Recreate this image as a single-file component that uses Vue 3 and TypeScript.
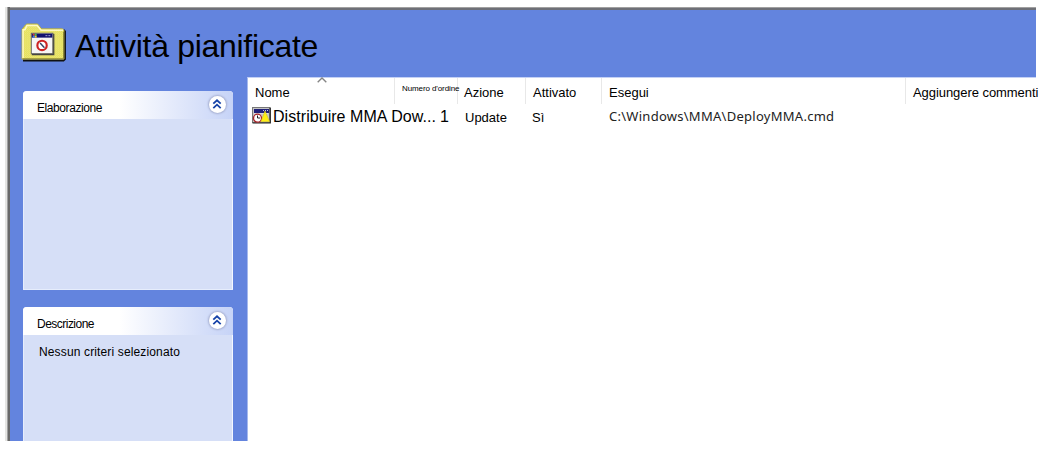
<script setup lang="ts">
interface Column {
  key: string
  label: string
}

interface Panel {
  key: string
  title: string
  text: string
}

const columns: Column[] = [
  { key: 'name', label: 'Nome' },
  { key: 'order', label: "Numero d'ordine" },
  { key: 'action', label: 'Azione' },
  { key: 'enabled', label: 'Attivato' },
  { key: 'run', label: 'Esegui' },
  { key: 'comment', label: 'Aggiungere commenti' },
]

const row: Record<string, string> = {
  name: 'Distribuire MMA Dow...',
  order: '1',
  action: 'Update',
  enabled: 'Sì',
  run: 'C:\\Windows\\MMA\\DeployMMA.cmd',
  comment: '',
}

const panels: Panel[] = [
  { key: 'processing', title: 'Elaborazione', text: '' },
  { key: 'description', title: 'Descrizione', text: 'Nessun criteri selezionato' },
]
</script>

<template>
  <div class="page">
    <main class="window">
      <header class="banner">
        <svg class="folder" width="45" height="39" viewBox="0 0 46 40">
          <defs>
            <pattern id="dither" width="2" height="2" patternUnits="userSpaceOnUse">
              <rect width="2" height="2" fill="#e3de58" />
              <rect width="1" height="1" fill="#efea80" />
              <rect x="1" y="1" width="1" height="1" fill="#ebe672" />
            </pattern>
          </defs>
          <path d="M2 38.500h41.500l1.500-1.500V8.500l-1.500-1.500" fill="none" stroke="#111" stroke-width="2" />
          <path d="M1 37V6.500L4.500 2 6 1h11l4 5h21.500l1.500 1.500V37z" fill="url(#dither)" stroke="#b5ad45" stroke-width="1" />
          <path d="M2 36V7h2l2-4.500h10.500L20.500 7.500H43" fill="none" stroke="#fffac4" stroke-width="1.500" />
          <path d="M2 36.800h41.500V9" fill="none" stroke="#8b8637" stroke-width="1" />
          <rect x="10.500" y="10.500" width="22" height="21" fill="#f5f5f5" stroke="#686868" />
          <path d="M11 32.300h22.500V11" fill="none" stroke="#444" stroke-width="1.300" />
          <rect x="11" y="11" width="21" height="4" fill="#11116f" />
          <rect x="12" y="11" width="2" height="2" fill="#e73b29" />
          <rect x="14" y="11" width="2" height="2" fill="#49bd52" />
          <rect x="12" y="13" width="2" height="2" fill="#3b83ee" />
          <rect x="14" y="13" width="2" height="2" fill="#f1cd36" />
          <path d="M25 13h2m1 0h2" stroke="#a4a4cc" />
          <circle cx="21.500" cy="23" r="4.800" fill="#fff" stroke="#c22" stroke-width="2.200" />
          <path d="M19.500 20.500l4.500 5" stroke="#346" stroke-width="1.500" />
        </svg>
        <h1>Attività pianificate</h1>
      </header>
      <div class="body">
        <aside class="sidebar">
          <section v-for="panel in panels" :key="panel.key" class="panel" :class="panel.key">
            <div class="panel-head">
              <span class="panel-title">{{ panel.title }}</span>
              <span class="toggle">
                <svg width="10" height="10" viewBox="0 0 10 10">
                  <path d="M1.300 4.700L5 1.300l3.700 3.400M1.300 9.100L5 5.700l3.700 3.400" fill="none" stroke="#1643a8" stroke-width="1.800" />
                </svg>
              </span>
            </div>
            <p v-if="panel.text" class="panel-text">{{ panel.text }}</p>
          </section>
        </aside>
        <section class="list">
          <div class="grid head">
            <div v-for="column in columns" :key="column.key" class="cell" :class="column.key">
              <span>{{ column.label }}</span>
              <svg v-if="column.key === 'name'" class="sort" width="10" height="6" viewBox="0 0 10 6">
                <path d="M.7 5.200L5 1l4.300 4.200" fill="none" stroke="#858585" stroke-width="1.400" />
              </svg>
            </div>
          </div>
          <div class="grid row">
            <div v-for="column in columns" :key="column.key" class="cell" :class="column.key">
              <svg v-if="column.key === 'name'" class="task" width="19" height="17" viewBox="0 0 19 17">
                <rect x=".5" y=".5" width="17" height="15" fill="#c5c5c5" stroke="#777" />
                <path d="M.5 16H18.300V.5" fill="none" stroke="#222" stroke-width="1.200" />
                <rect x="2" y="2" width="15" height="4" fill="#202078" />
                <path d="M11 3.500h1m1 0h1m1 0h1" stroke="#c8c8e8" />
                <rect x="2" y="6" width="14" height="1" fill="#dcdcdc" />
                <circle cx="5.500" cy="11.200" r="4" fill="#fff" stroke="#a82227" stroke-width="1.300" />
                <path d="M5.500 8.500V11H8" fill="none" stroke="#222" />
                <path d="M13 4L17.500 14.500h-8.500z" fill="#ffef16" stroke="#d8c814" stroke-width=".6" />
              </svg>
              <span>{{ row[column.key] }}</span>
            </div>
          </div>
        </section>
      </div>
    </main>
  </div>
</template>

<style>
body {
  margin: 0;
  background: #fff;
}
</style>

<style scoped>
.page {
  box-sizing: border-box;
  width: 1047px;
  height: 450px;
  padding: 7px 0 0 5px;
  font-family: "Liberation Sans", Arial, sans-serif;
  color: #000;
}
.window {
  box-sizing: border-box;
  width: 1031px;
  height: 434px;
  border-left: 2px solid #e5e5e3;
  background: #6384de;
  display: flex;
  flex-direction: column;
  box-shadow: inset 1px 0 #a0a0a0, inset 3px 0 #696969, inset 0 1px #a0a0a0, inset 0 3px #6e7077;
}
.banner {
  box-sizing: border-box;
  height: 70px;
  flex: none;
  padding: 16px 0 0 14px;
  display: flex;
  align-items: flex-start;
}
.folder {
  flex: none;
}
h1 {
  margin: 5px 0 0 9px;
  font-size: 32px;
  line-height: 36px;
  font-weight: 400;
  letter-spacing: -0.3px;
  white-space: nowrap;
}
.body {
  display: flex;
  flex: 1;
  min-height: 0;
}
.sidebar {
  box-sizing: border-box;
  width: 240px;
  flex: none;
  padding: 14px 14px 0 16px;
  display: flex;
  flex-direction: column;
  gap: 17px;
}
.panel {
  box-sizing: border-box;
  background: #d6dff7;
  border-radius: 4px 4px 0 0;
  box-shadow: inset 1px -1px #e6edfc, inset -1px 0 #f4f7ff;
}
.processing {
  height: 199px;
  flex: none;
}
.description {
  flex: 1;
  box-shadow: inset 1px 0 #e6edfc, inset -1px 0 #f4f7ff;
}
.panel-head {
  height: 28px;
  border-radius: 4px 4px 0 0;
  background: linear-gradient(90deg, #fff 0%, #fff 46%, #c6d3f7 100%);
  display: flex;
  justify-content: space-between;
  align-items: flex-start;
  padding: 0 7.5px 0 14px;
}
.panel-title {
  font-size: 12px;
  line-height: 14px;
  margin-top: 10px;
  letter-spacing: -0.42px;
}
.description .panel-title {
  letter-spacing: -0.52px;
}
.toggle {
  width: 17px;
  height: 17px;
  margin-top: 4.5px;
  border-radius: 50%;
  background: #fff;
  box-shadow: 0 0 2px 1px #a5aed0;
  display: flex;
  align-items: center;
  justify-content: center;
}
.panel-text {
  margin: 10px 0 0 16px;
  font-size: 12px;
  line-height: 14px;
  letter-spacing: 0.14px;
  white-space: nowrap;
}
.list {
  flex: 1;
  min-width: 0;
  background: #fff;
  border-left: 1px solid #a6b9ed;
  border-top: 1px solid #c4d1f5;
}
.grid {
  display: grid;
  grid-template-columns: 147px 63px 68px 76px 304px 1fr;
  font-size: 13px;
  white-space: nowrap;
}
.cell {
  box-sizing: border-box;
  padding-left: 7px;
  min-width: 0;
}
.head .cell {
  position: relative;
  height: 26px;
  line-height: 15px;
  padding-top: 7px;
  border-right: 1px solid #e8e8e8;
}
.head .comment {
  border-right: 0;
  letter-spacing: -0.06px;
}
.head .order {
  font-size: 8px;
  padding-top: 3px;
  letter-spacing: -0.1px;
}
.head .action {
  padding-left: 6px;
}
.sort {
  position: absolute;
  left: 69px;
  top: -1px;
}
.row .cell {
  height: 26px;
  line-height: 15px;
  padding-top: 6px;
}
.row .name {
  display: flex;
  align-items: flex-start;
  padding: 3px 0 0 4px;
  gap: 2px;
}
.task {
  flex: none;
}
.row .name span,
.row .order {
  font-size: 16px;
  line-height: 18px;
}
.row .name span {
  margin-top: 1px;
  letter-spacing: 0.05px;
}
.row .order {
  padding: 4px 0 0 45px;
}
.row .action {
  padding-left: 7px;
}
.row .enabled {
  padding-left: 6px;
}
.row .run {
  font-family: "Noto Sans", "Open Sans", sans-serif;
  padding-top: 5px;
  letter-spacing: 0.27px;
  color: #222;
}
</style>
